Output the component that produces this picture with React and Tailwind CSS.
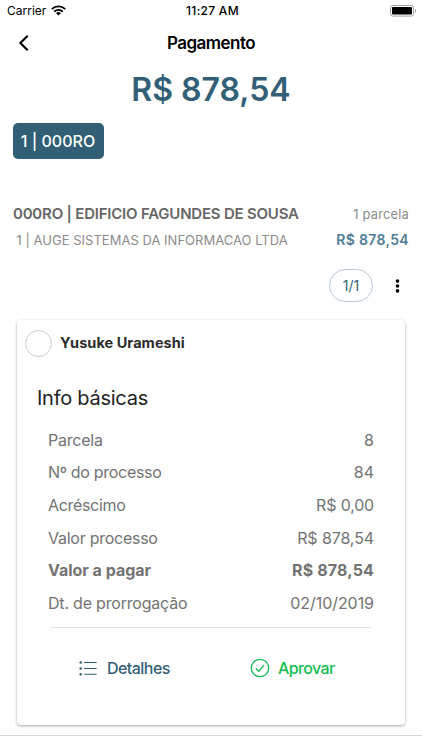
const details = [
  { label: "Parcela", value: "8", l: "tracking-[-0.22px]", v: "" },
  { label: "Nº do processo", value: "84", l: "tracking-[-0.3px]", v: "" },
  { label: "Acréscimo", value: "R$ 0,00", l: "tracking-[-0.32px]", v: "tracking-[-0.18px]" },
  { label: "Valor processo", value: "R$ 878,54", l: "tracking-[-0.26px]", v: "tracking-[-0.1px]" },
  { label: "Valor a pagar", value: "R$ 878,54", l: "font-bold tracking-[-0.02px]", v: "font-bold tracking-[0.15px]" },
  { label: "Dt. de prorrogação", value: "02/10/2019", l: "tracking-[-0.2px]", v: "tracking-[-0.05px]" },
];

function StatusBar() {
  return (
    <div className="grid h-[22px] grid-cols-3 items-center pl-[7px] pr-[5px] text-[12px] text-black">
      <div className="flex items-center gap-[5px]">
        <span>Carrier</span>
        <svg className="mb-px" width="15" height="11" viewBox="0 0 15 11" fill="none" stroke="black" strokeWidth="1.9">
          <path d="M0.8 4.1a9.6 9.6 0 0 1 13.4 0" />
          <path d="M3.2 6.6a6.1 6.1 0 0 1 8.6 0" />
          <path d="M7.5 10.6 5.1 8.2a3.5 3.5 0 0 1 4.8 0z" fill="black" stroke="none" />
        </svg>
      </div>
      <span className="pl-px text-center font-medium tracking-[0.28px]">11:27 AM</span>
      <svg className="justify-self-end" width="27" height="12" viewBox="0 0 27 12">
        <rect x="0.5" y="0.5" width="23" height="10.6" rx="2.4" fill="none" stroke="#a3a3a3" />
        <rect x="2" y="2" width="20" height="7.6" rx="1" fill="black" />
        <path d="M25 4v4c1.5-.6 1.5-3.4 0-4z" fill="#a3a3a3" />
      </svg>
    </div>
  );
}

function Header() {
  return (
    <div className="grid h-[43px] grid-cols-[40px_1fr_40px] items-center">
      <svg className="mb-[2px] ml-[18px]" width="12" height="18" viewBox="0 0 12 18" fill="none" stroke="black" strokeWidth="2.2">
        <path d="M9.7 1.8 2.4 9l7.3 7.2" />
      </svg>
      <h1 className="text-center text-[17px] font-semibold tracking-[-0.55px] text-black">Pagamento</h1>
    </div>
  );
}

function PaymentCard() {
  return (
    <div className="ml-[17px] mt-[18px] flex h-[405px] w-[388px] flex-col rounded-[4px] bg-white shadow-[0_1px_3px_rgba(0,0,0,0.35)]">
      <div className="flex h-[46px] items-center gap-2 pl-[8px]">
        <span className="size-[27px] rounded-full border border-[#c9c9c9]" />
        <span className="text-[14.5px] font-bold tracking-[0.05px] text-[#2b2b2b]">Yusuke Urameshi</span>
      </div>
      <h2 className="mt-[16px] pl-[20px] text-[20px] leading-[32px] tracking-[-0.26px] text-[#222]">Info básicas</h2>
      <dl className="mt-[9.6px] pl-[31px] pr-[31px] text-[16px] text-[#737373]">
        {details.map((d) => (
          <div key={d.label} className="flex h-[32.6px] items-center justify-between">
            <dt className={d.l}>{d.label}</dt>
            <dd className={d.v}>{d.value}</dd>
          </div>
        ))}
      </dl>
      <div className="ml-[34px] mt-[8px] w-[320px] border-t border-[#e0e0e0]" />
      <div className="mt-[20px] flex h-[40px] items-center pl-[62px] text-[16px]">
        <div className="flex w-[171px] items-center gap-[10px] text-[#315f76]">
          <svg width="18" height="15" viewBox="0 0 18 15" fill="currentColor">
            <circle cx="1.7" cy="1.6" r="1.25" />
            <circle cx="1.7" cy="7.4" r="1.25" />
            <circle cx="1.7" cy="13.2" r="1.25" />
            <path d="M5.2 1.1h12.4v1H5.2zM5.2 6.9h12.4v1H5.2zM5.2 12.7h12.4v1H5.2z" />
          </svg>
          <span className="font-medium tracking-[-0.55px]">Detalhes</span>
        </div>
        <div className="flex items-center gap-[8px] text-[#0fbd52]">
          <svg width="20" height="20" viewBox="0 0 20 20" fill="none" stroke="currentColor" strokeWidth="1.3">
            <circle cx="10" cy="10" r="8.7" />
            <path d="m5.8 10.5 2.9 2.7 5.5-6.1" />
          </svg>
          <span className="font-medium tracking-[-0.6px]">Aprovar</span>
        </div>
      </div>
    </div>
  );
}

export default function App() {
  return (
    <div className="flex h-[750px] w-[422px] flex-col overflow-hidden whitespace-nowrap bg-white font-['Inter',sans-serif]">
      <StatusBar />
      <Header />
      <div className="flex h-[48px] items-center justify-center pt-[2px] text-[32px] font-semibold text-[#335f77]">R$ 878,54</div>
      <div className="ml-[12.5px] mt-[10px] flex h-[36px] w-[91px] items-center justify-center rounded-[5px] bg-[#315f76] text-[16px] font-medium text-white">
        1 | 000RO
      </div>
      <div className="mt-[42px] flex h-[26px] items-center justify-between pl-[13px] pr-[13px]">
        <span className="pt-px text-[15px] font-semibold tracking-[-0.21px] text-[#666]">000RO | EDIFICIO FAGUNDES DE SOUSA</span>
        <span className="pt-[2px] text-[13px] tracking-[0.13px] text-[#8c8c8c]">1 parcela</span>
      </div>
      <div className="flex h-[26px] items-center justify-between pl-[16.5px] pr-[13px]">
        <span className="pt-[2px] text-[13px] tracking-[0.02px] text-[#8c8c8c]">1 | AUGE SISTEMAS DA INFORMACAO LTDA</span>
        <span className="mb-[2px] text-[14px] font-semibold tracking-[0.34px] text-[#4f7d95]">R$ 878,54</span>
      </div>
      <div className="mt-[16px] flex items-center justify-end gap-[22px] pr-[22px]">
        <span className="flex h-[33px] w-[44px] items-center justify-center rounded-full border border-[#b9c7d6] text-[14px] text-[#315f76]">1/1</span>
        <svg width="5" height="14" viewBox="0 0 5 14">
          <circle cx="2.5" cy="2.1" r="1.8" />
          <circle cx="2.5" cy="7" r="1.8" />
          <circle cx="2.5" cy="11.9" r="1.8" />
        </svg>
      </div>
      <PaymentCard />
      <div className="mt-[10px] border-t border-[#d6d6d6]" />
    </div>
  );
}
